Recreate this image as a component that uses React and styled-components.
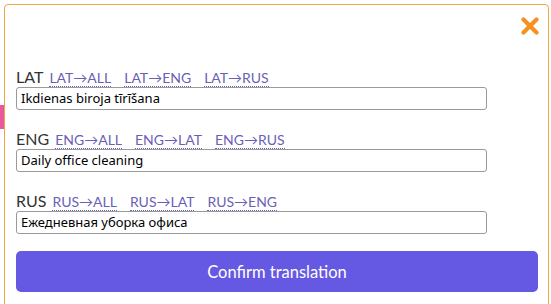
import React from 'react'
import styled, { createGlobalStyle } from 'styled-components'

const GlobalStyle = createGlobalStyle`
    html, body {
        margin: 0;
        padding: 0;
        background: #fff;
        overflow: hidden;
    }
`

const Page = styled.div`
    display: flex;
    width: 551px;
    height: 304px;
    overflow: hidden;
    background: #fff;
`

const Behind = styled.div`
    width: 4px;
    flex: none;
    display: flex;
    flex-direction: column;
`

const PinkTab = styled.div`
    margin-top: 105px;
    height: 24px;
    background: #e9589a;
`

const Modal = styled.div`
    margin-top: 4px;
    width: 545px;
    height: 330px;
    box-sizing: border-box;
    flex: none;
    border: 1px solid #f0a44a;
    border-radius: 4px;
    background: #fff;
    padding: 12px 9px 0 11px;
    display: flex;
    flex-direction: column;
    font-family: Lato, "Open Sans", sans-serif;
`

const Header = styled.div`
    display: flex;
    justify-content: flex-end;
    height: 18px;
`

const CloseButton = styled.button`
    border: 0;
    background: none;
    padding: 0;
    width: 18px;
    height: 18px;
    cursor: pointer;
    display: flex;
`

const Sections = styled.div`
    margin-top: 32px;
    display: flex;
    flex-direction: column;
    gap: 19px;
`

const Section = styled.div`
    display: flex;
    flex-direction: column;
`

const LabelRow = styled.div`
    height: 20px;
    display: flex;
    align-items: baseline;
    gap: 13px;
    line-height: 20px;
`

const LangName = styled.span`
    font-size: 16px;
    color: #333;
    margin-right: -7px;
`

const CopyLink = styled.a`
    font-size: 14px;
    color: #6a5fb6;
    text-decoration: none;
    border-bottom: 1px dotted #6a5fb6;
    line-height: 16px;
    cursor: pointer;
`

const TextInput = styled.input`
    width: 471px;
    height: 23px;
    box-sizing: border-box;
    border: 1px solid #9a9a9a;
    border-radius: 3px;
    padding: 0 4px 1px;
    font-family: "Noto Sans", sans-serif;
    font-size: 13px;
    color: #000;
    outline: none;
`

const ConfirmButton = styled.button`
    margin-top: 17px;
    width: 522px;
    height: 41px;
    border: 0;
    border-radius: 5px;
    background: #6559e3;
    color: #fff;
    font-family: Lato, "Open Sans", sans-serif;
    font-size: 16.5px;
    cursor: pointer;
`

const languages = [
    { code: 'LAT', targets: ['ALL', 'ENG', 'RUS'], value: 'Ikdienas biroja tīrīšana' },
    { code: 'ENG', targets: ['ALL', 'LAT', 'RUS'], value: 'Daily office cleaning' },
    { code: 'RUS', targets: ['ALL', 'LAT', 'ENG'], value: 'Ежедневная уборка офиса' },
]

const App = () => {
    return (
        <>
            <GlobalStyle />
            <Page>
                <Behind>
                    <PinkTab />
                </Behind>
                <Modal>
                    <Header>
                        <CloseButton aria-label="Close">
                            <svg width="18" height="18" viewBox="0 0 18 18">
                                <path d="M2.5 2.5 L15.5 15.5 M15.5 2.5 L2.5 15.5" stroke="#f7901e" strokeWidth="4.2" strokeLinecap="round" />
                            </svg>
                        </CloseButton>
                    </Header>
                    <Sections>
                        {languages.map((lang) => (
                            <Section key={lang.code}>
                                <LabelRow>
                                    <LangName>{lang.code}</LangName>
                                    {lang.targets.map((t) => (
                                        <CopyLink key={t}>{lang.code}→{t}</CopyLink>
                                    ))}
                                </LabelRow>
                                <TextInput defaultValue={lang.value} />
                            </Section>
                        ))}
                    </Sections>
                    <ConfirmButton>Confirm translation</ConfirmButton>
                </Modal>
            </Page>
        </>
    )
}

export default App
